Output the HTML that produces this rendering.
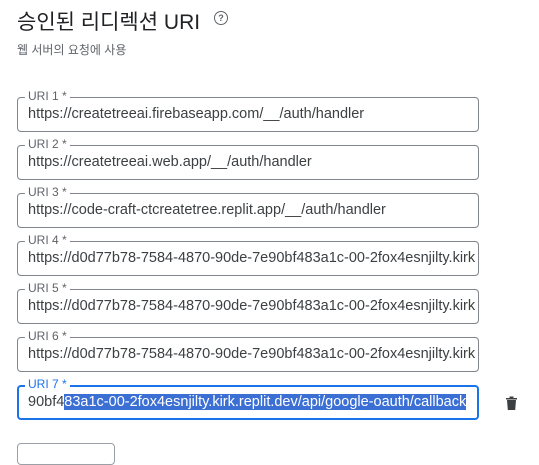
<!DOCTYPE html>
<html><head><meta charset="utf-8"><style>
body{margin:0;width:539px;height:451px;overflow:hidden;background:#fff;font-family:"Liberation Sans","Noto Sans CJK KR",sans-serif;color:#202124;position:relative}
.t{position:absolute;left:17px;top:6px;font-size:21px;font-family:"Liberation Sans","Noto Sans CJK KR",sans-serif}
.q{position:absolute;left:214px;top:11px;width:12px;height:12px;border:1.5px solid #5f6368;border-radius:50%;font-size:9px;line-height:12px;text-align:center;color:#5f6368;font-weight:bold}
.s{position:absolute;left:17px;top:41px;font-size:12px;color:#5f6368}
.f{position:absolute;left:17px;width:460px;height:33px;border:1px solid #80868b;border-radius:4px}
.f .l{position:absolute;left:7px;top:-9px;background:#fff;padding:0 3px;font-size:12px;color:#5f6368}
.f .v{position:absolute;left:10px;top:8px;font-size:14.5px;white-space:nowrap;overflow:hidden;width:448px;color:#3c4043}
.a{border:2px solid #1a73e8;height:31px;width:458px}
.a .l{color:#1a73e8;top:-10px;left:6px}
.a .v{left:9px;top:7px}
.sel{background:#3b6fd4;color:#fff}
.b{position:absolute;left:17px;top:443px;width:96px;height:20px;border:1px solid #9aa0a6;border-radius:4px}
</style></head><body>
<div class="t">승인된 리디렉션 URI</div>
<div class="q">?</div>
<div class="s">웹 서버의 요청에 사용</div>
<div class="f" style="top:97px"><span class="l">URI 1 *</span><div class="v">https://createtreeai.firebaseapp.com/__/auth/handler</div></div>
<div class="f" style="top:145px"><span class="l">URI 2 *</span><div class="v">https://createtreeai.web.app/__/auth/handler</div></div>
<div class="f" style="top:193px"><span class="l">URI 3 *</span><div class="v">https://code-craft-ctcreatetree.replit.app/__/auth/handler</div></div>
<div class="f" style="top:241px"><span class="l">URI 4 *</span><div class="v">https://d0d77b78-7584-4870-90de-7e90bf483a1c-00-2fox4esnjilty.kirk.replit.dev</div></div>
<div class="f" style="top:289px"><span class="l">URI 5 *</span><div class="v">https://d0d77b78-7584-4870-90de-7e90bf483a1c-00-2fox4esnjilty.kirk.replit.dev</div></div>
<div class="f" style="top:337px"><span class="l">URI 6 *</span><div class="v">https://d0d77b78-7584-4870-90de-7e90bf483a1c-00-2fox4esnjilty.kirk.replit.dev</div></div>
<div class="f a" style="top:385px"><span class="l">URI 7 *</span><div class="v">90bf4<span class="sel">83a1c-00-2fox4esnjilty.kirk.replit.dev/api/google-oauth/callback</span></div></div>
<svg style="position:absolute;left:504px;top:395px" width="15" height="16" viewBox="0 0 15 16"><path d="M2 3h11v1.5H2zM5.5 1.5h4V3h-4zM3 5h9l-.8 10H3.8z" fill="#3c4043"/></svg>
<div class="b"></div>
</body></html>
